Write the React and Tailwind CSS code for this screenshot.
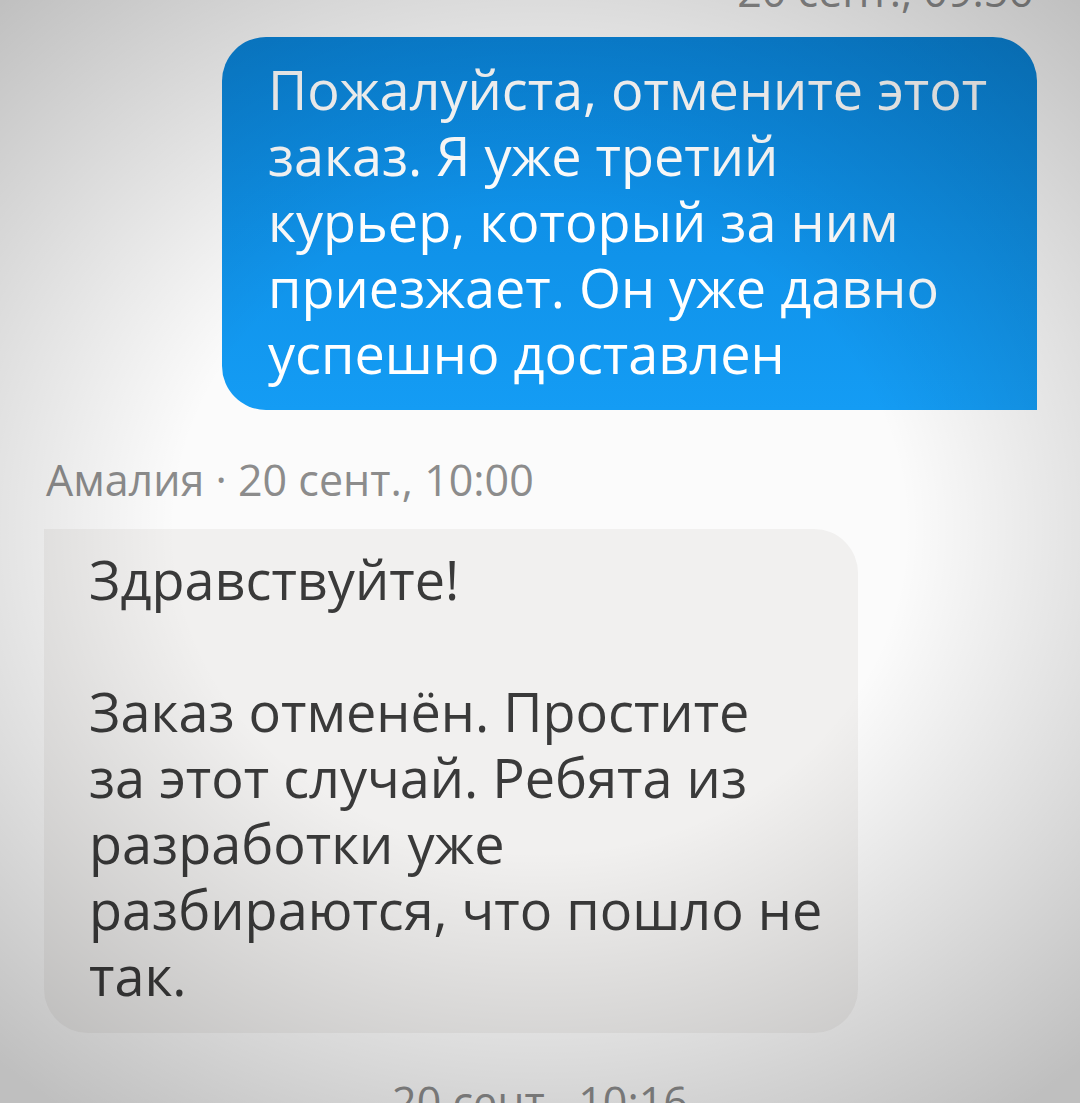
export default function App() {
  const font = { fontFamily: '"Open Sans", "Noto Sans", sans-serif' };
  return (
    <div className="relative w-[1080px] h-[1103px] overflow-hidden bg-[#fbfbfb]" style={font}>
      <div className="flex flex-col px-[43px] pt-0">
        <div className="-mt-[34px] h-[50px] self-end pr-[4px] whitespace-nowrap text-[43px] leading-[50px] text-[#8c8c8c]">20 сент., 09:56</div>
        <div className="mt-[21px] self-end w-[815px] rounded-[44px] rounded-br-none bg-gradient-to-b from-[#0a86dc] to-[#149cf4] pl-[46px] pr-[20px] pt-[19px] pb-[24px] whitespace-nowrap text-[54px] leading-[66px] text-white">
          <div>Пожалуйста, отмените этот</div>
          <div>заказ. Я уже третий</div>
          <div>курьер, который за ним</div>
          <div>приезжает. Он уже давно</div>
          <div>успешно доставлен</div>
        </div>
        <div className="mt-[45px] pl-[3px] whitespace-nowrap text-[43px] leading-[50px] text-[#8c8c8c]">Амалия · 20 сент., 10:00</div>
        <div className="mt-[24px] ml-[1px] w-[814px] rounded-[44px] rounded-tl-none bg-[#f1f0ef] pl-[45px] pr-[20px] pt-[17px] pb-[25px] whitespace-nowrap text-[54px] leading-[66px] text-[#3a3a3a]">
          <div>Здравствуйте!</div>
          <div>&nbsp;</div>
          <div>Заказ отменён. Простите</div>
          <div>за этот случай. Ребята из</div>
          <div>разработки уже</div>
          <div>разбираются, что пошло не</div>
          <div>так.</div>
        </div>
        <div className="mt-[44px] self-center whitespace-nowrap text-[43px] leading-[50px] text-[#8c8c8c]">20 сент., 10:16</div>
      </div>
      <div className="pointer-events-none absolute inset-0 bg-[radial-gradient(ellipse_75%_65%_at_50%_48%,rgba(0,0,0,0)_45%,rgba(0,0,0,0.24)_100%)]"></div>
    </div>
  );
}
